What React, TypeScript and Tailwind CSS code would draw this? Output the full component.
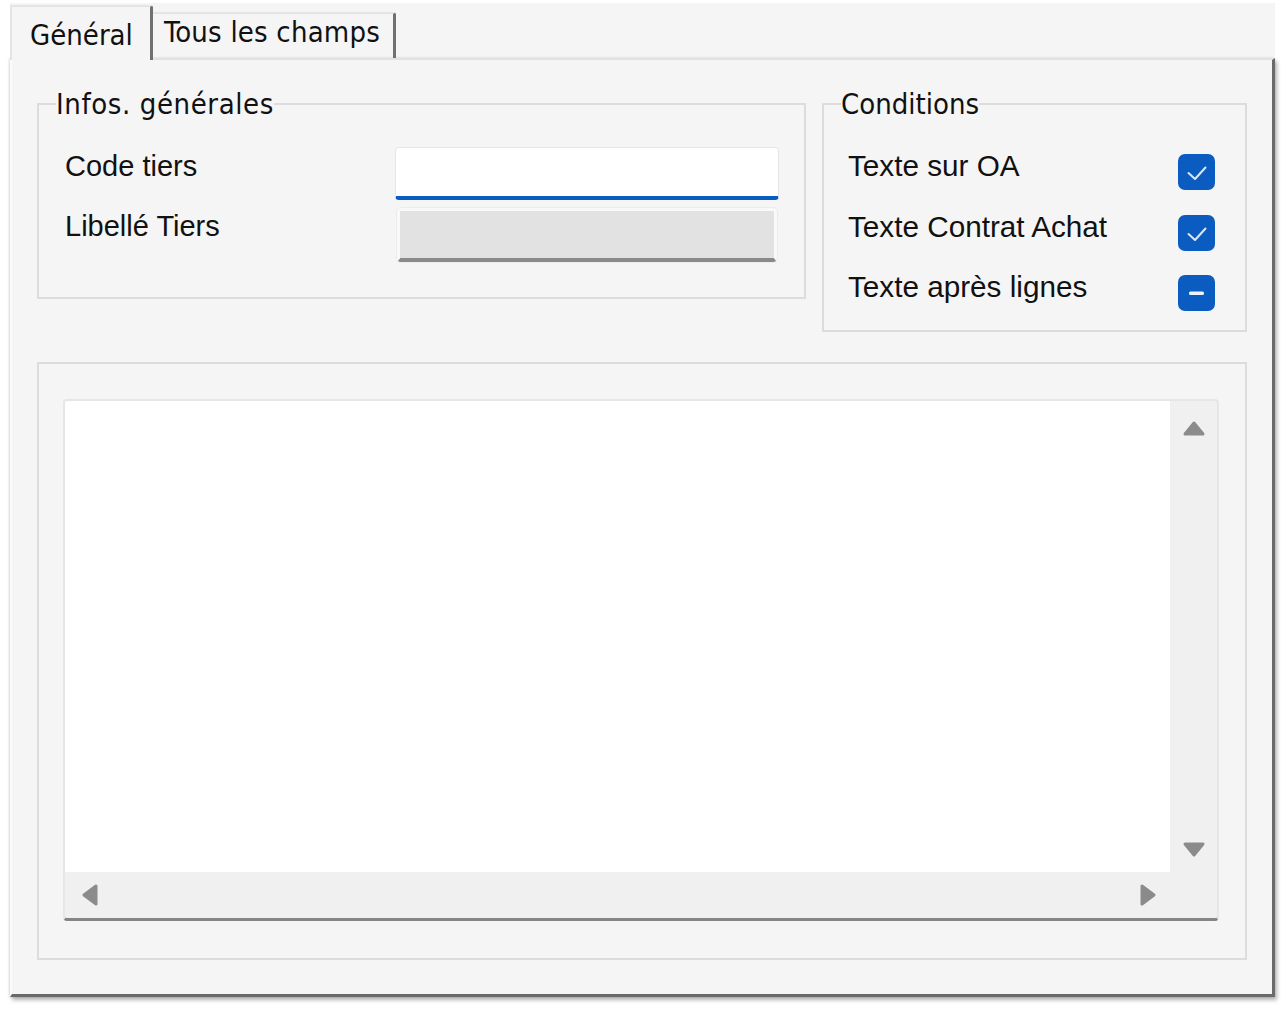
import React from "react";

const tahoma = "font-['DejaVu_Sans_Condensed','DejaVu_Sans',sans-serif]";
const arial = "font-['Liberation_Sans',Arial,sans-serif]";

const Triangle: React.FC<{ dir: "up" | "down" | "left" | "right" }> = ({ dir }) => {
  const horiz = dir === "left" || dir === "right";
  const w = horiz ? 18 : 24;
  const h = horiz ? 24 : 17;
  const pts: Record<string, string> = {
    up: "3,14 12,3 21,14",
    down: "3,3 12,14 21,3",
    left: "15,3 3,12 15,21",
    right: "3,3 15,12 3,21",
  };
  return (
    <svg width={w} height={h} viewBox={`0 0 ${w} ${h}`}>
      <polygon
        points={pts[dir]}
        fill="#8b8b8b"
        stroke="#8b8b8b"
        strokeWidth={3}
        strokeLinejoin="round"
      />
    </svg>
  );
};

const CheckBox: React.FC<{ state: "checked" | "mixed" }> = ({ state }) => {
  return (
    <div className="mt-[5px] w-[37px] h-[36px] rounded-[7px] bg-[#0b5cc0]">
      <svg width="37" height="36" viewBox="0 0 37 36">
        {state === "checked" ? (
          <polyline
            points="10.5,19 17,25 27.5,13.5"
            fill="none"
            stroke="#dce7f6"
            strokeWidth={2}
            strokeLinecap="round"
            strokeLinejoin="round"
          />
        ) : (
          <rect x="11" y="16.5" width="15" height="3.5" rx="1.5" fill="#eef3fb" />
        )}
      </svg>
    </div>
  );
};

const conditions: { label: string; state: "checked" | "mixed"; h: string }[] = [
  { label: "Texte sur OA", state: "checked", h: "h-[61px]" },
  { label: "Texte Contrat Achat", state: "checked", h: "h-[60px]" },
  { label: "Texte après lignes", state: "mixed", h: "h-[60px]" },
];

export default function App() {
  return (
    <div className="w-[1284px] h-[1012px] bg-white overflow-hidden pt-[3px] text-[#111]">
      <div className="ml-[10px] w-[1265px]">
        {/* tab strip */}
        <div className="flex items-end h-[55px] bg-[#f5f5f5]">
          <div
            className={`relative z-10 -mb-[2px] h-[55px] w-[143px] bg-[#f5f5f5] border-t-2 border-l-2 border-[#e4e4e4] border-r-[3px] border-r-[#707070] rounded-tr-[3px] pl-[18px] pt-[11px] text-[29px] leading-[34px] ${tahoma}`}
          >
            Général
          </div>
          <div
            className={`h-[46px] w-[243px] border-t-2 border-[#e4e4e4] border-r-[3px] border-r-[#707070] rounded-tr-[3px] pl-[11px] pt-[1px] text-[29px] leading-[34px] tracking-[0.2px] ${tahoma}`}
          >
            Tous les champs
          </div>
        </div>

        {/* panel */}
        <div className="h-[939px] bg-[#f5f5f5] border-t-2 border-t-[#e2e2e2] border-l-2 border-l-[#fbfbfb] border-r-[3px] border-r-[#6a6a6a] border-b-[3px] border-b-[#6a6a6a] shadow-[2px_3px_4px_rgba(0,0,0,0.3),-1px_0_2px_rgba(0,0,0,0.12)] pl-[25px] pt-[43px]">
          <div className="flex items-start gap-[16px]">
            {/* Infos. générales */}
            <div className="relative w-[769px] h-[196px] border-2 border-[#dcdcdc] pl-[26px] pt-[42px]">
              <span
                className={`absolute -top-[18px] left-[17px] bg-[#f5f5f5] text-[29px] leading-[34px] tracking-[0.6px] ${tahoma}`}
              >
                Infos. générales
              </span>
              <div className={`grid grid-cols-[330px_384px] gap-y-[8px] text-[29px] leading-[33px] ${arial}`}>
                <div className="mt-[3px]">Code tiers</div>
                <div className="h-[53px] bg-white border border-[#e3e7ec] border-b-[4px] border-b-[#0b5cc0] rounded-[4px]" />
                <div className="mt-[2px]">Libellé Tiers</div>
                <div className="ml-[2px] w-[380px] h-[54px] bg-[#e2e2e2] border-[3px] border-[#f9f9f9] border-b-[4px] border-b-[#8a8a8a] rounded-[4px] shadow-[0_0_0_1px_#ececec]" />
              </div>
            </div>

            {/* Conditions */}
            <div className="relative w-[425px] h-[229px] border-2 border-[#dcdcdc] pl-[24px] pr-[30px] pt-[44px]">
              <span
                className={`absolute -top-[18px] left-[17px] bg-[#f5f5f5] text-[29px] leading-[34px] ${tahoma}`}
              >
                Conditions
              </span>
              {conditions.map((c) => (
                <div key={c.label} className={`flex items-start justify-between ${c.h}`}>
                  <span className={`text-[29.7px] leading-[33px] ${arial}`}>{c.label}</span>
                  <CheckBox state={c.state} />
                </div>
              ))}
            </div>
          </div>

          {/* lower group with memo field */}
          <div className="mt-[30px] w-[1210px] h-[598px] border-2 border-[#dcdcdc] pl-[24px] pt-[35px]">
            <div className="w-[1156px] h-[522px] border-2 border-[#e6e6e6] border-b-[3px] border-b-[#858585] rounded-[4px] grid grid-cols-[1fr_47px] grid-rows-[1fr_46px] bg-[#f0f0f0] overflow-hidden">
              <div className="bg-white" />
              <div className="flex flex-col items-center justify-between pt-[19px] pb-[14px] pl-[1px]">
                <Triangle dir="up" />
                <Triangle dir="down" />
              </div>
              <div className="flex items-center justify-between pl-[16px] pr-[13px]">
                <Triangle dir="left" />
                <Triangle dir="right" />
              </div>
              <div />
            </div>
          </div>
        </div>
      </div>
    </div>
  );
}
